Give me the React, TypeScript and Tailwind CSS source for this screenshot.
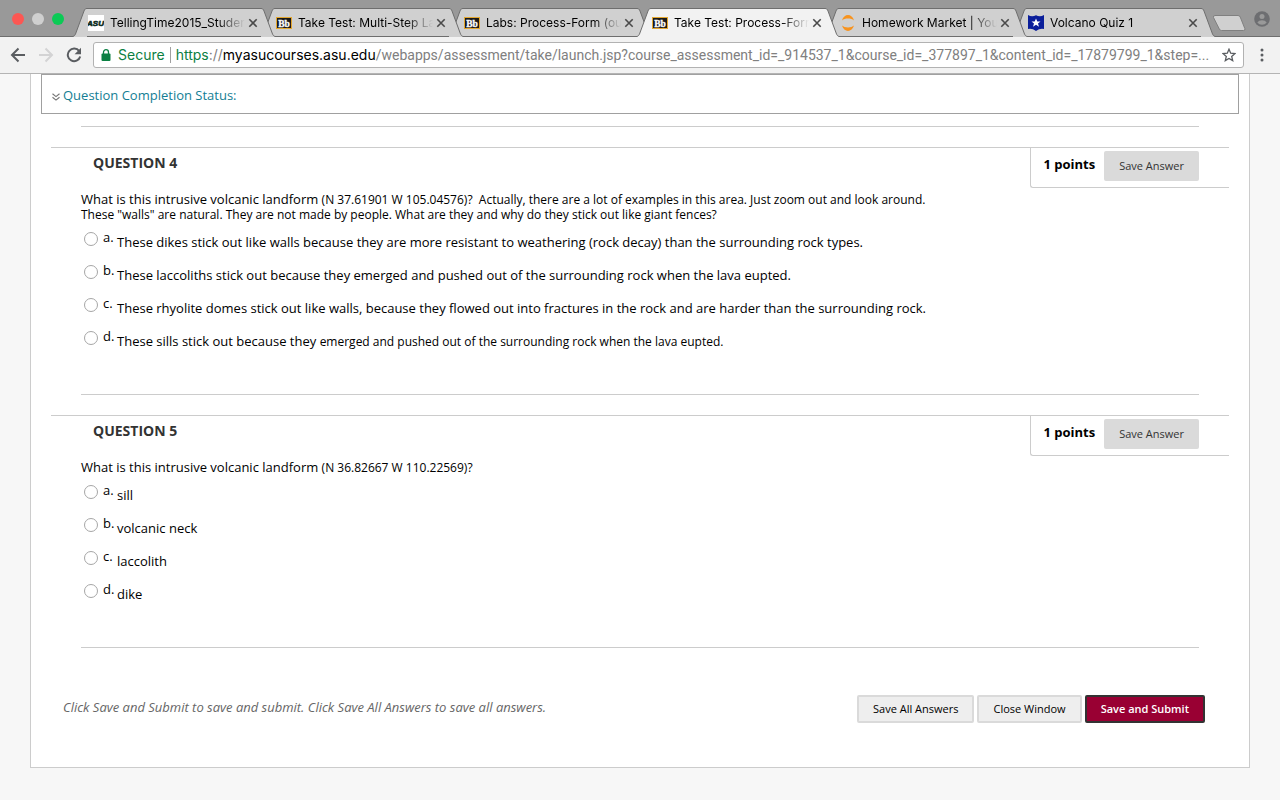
import type { ReactNode } from 'react';

type Option = { letter: string; text: ReactNode };

const BbIcon = () => (
  <svg viewBox="0 0 16 16" className="w-4 h-4">
    <rect x="0.5" y="2.5" width="15" height="11" fill="#1a1a1a" stroke="#e3a72f" />
    <text x="8" y="11.5" textAnchor="middle" fontSize="9.5" fontWeight="700" fill="#fff" stroke="#fff" strokeWidth="0.3" fontFamily="Liberation Serif, serif">Bb</text>
  </svg>
);

const AsuIcon = () => (
  <svg viewBox="0 0 16 16" className="w-4 h-4">
    <rect width="16" height="16" fill="#fff" />
    <text x="7.5" y="11" textAnchor="middle" fontSize="8" fontWeight="700" fontStyle="italic" fill="#0b2a1c" stroke="#0b2a1c" strokeWidth="0.6" fontFamily="Liberation Sans, sans-serif">ASU</text>
  </svg>
);

const JupyterIcon = () => (
  <svg viewBox="0 0 16 16" className="w-4 h-4" fill="#f7931e">
    <path d="M2 5.4C3 2 5.4 0 8 0s5 2 6 5.4C12.6 4.1 10.4 3.6 8 3.6S3.4 4.1 2 5.4z" />
    <path d="M2 10.6C3 14 5.4 16 8 16s5-2 6-5.4c-1.4 1.3-3.6 1.8-6 1.8s-4.6-.5-6-1.8z" />
  </svg>
);

const StarBadgeIcon = () => (
  <svg viewBox="0 0 16 16" className="w-4 h-4">
    <path d="M0 0q4 2.5 8 .2Q12 2.5 16 0v14q-4-1-8 2-4-3-8-2z" fill="#0a1e9a" />
    <path d="M8 3.5l1.3 3h3.2L10 8.5l1 3.2-3-1.9-3 1.9 1-3.2-2.5-2h3.2z" fill="#fff" />
  </svg>
);

const tabs = [
  { icon: <AsuIcon />, title: 'TellingTime2015_Studer' },
  { icon: <BbIcon />, title: 'Take Test: Multi-Step La' },
  { icon: <BbIcon />, title: 'Labs: Process-Form (ou' },
  { icon: <BbIcon />, title: 'Take Test: Process-Form', active: true },
  { icon: <JupyterIcon />, title: 'Homework Market | You' },
  { icon: <StarBadgeIcon />, title: 'Volcano Quiz 1' }
];

const layers = ['z-[5]', 'z-[4]', 'z-[3]', 'z-10', 'z-[2]', 'z-[1]'];

const questions: { number: number; prompt: ReactNode; options: Option[] }[] = [
  {
    number: 4,
    prompt: (
      <>
        What is this intrusive volcanic landform <span className="text-[12px]">(N 37.61901 W 105.04576)?&nbsp; Actually, there are a lot of examples in this area. Just zoom out and look around.
        <br />
        These "walls" are natural. They are not made by people. What are they and why do they stick out like giant fences?</span>
      </>
    ),
    options: [
      { letter: 'a', text: 'These dikes stick out like walls because they are more resistant to weathering (rock decay) than the surrounding rock types.' },
      { letter: 'b', text: 'These laccoliths stick out because they emerged and pushed out of the surrounding rock when the lava eupted.' },
      { letter: 'c', text: 'These rhyolite domes stick out like walls, because they flowed out into fractures in the rock and are harder than the surrounding rock.' },
      {
        letter: 'd',
        text: <>These sills stick out because they <span className="text-[12px]">emerged and pushed out of the surrounding rock when the lava eupted.</span></>
      }
    ]
  },
  {
    number: 5,
    prompt: <>What is this intrusive volcanic landform <span className="text-[12px]">(N 36.82667 W 110.22569)?</span></>,
    options: [
      { letter: 'a', text: 'sill' },
      { letter: 'b', text: 'volcanic neck' },
      { letter: 'c', text: 'laccolith' },
      { letter: 'd', text: 'dike' }
    ]
  }
];

const Tab = ({ icon, title, active, layer }: { icon: ReactNode; title: string; active?: boolean; layer: string }) => {
  const fill = active ? '#f2f2f2' : '#d0d0d0';
  return (
    <div className={`relative flex flex-1 min-w-0 max-w-[202px] h-[29px] -mb-px -mr-[14px] ${layer}`}>
      <svg viewBox="0 0 14 29" className="w-[14px] h-[29px] shrink-0">
        <path d="M0 28.5C1.5 28 2 27 2.5 26L11 3C11.7 1 12.5.5 14 .5V29H0z" fill={fill} />
        <path d="M0 28.5C1.5 28 2 27 2.5 26L11 3C11.7 1 12.5.5 14 .5" fill="none" stroke="#6e6e6e" />
      </svg>
      <div className={`flex flex-1 min-w-0 items-center border-t border-[#6e6e6e] ${active ? 'bg-[#f2f2f2]' : 'bg-[#d0d0d0] border-b'}`}>
        <span className="shrink-0 ml-px">{icon}</span>
        <span className="flex-1 min-w-0 ml-1.5 overflow-hidden whitespace-nowrap text-[12px] leading-4 text-black [mask-image:linear-gradient(to_right,#000_calc(100%-28px),transparent)]">
          {title}
        </span>
        <button aria-label="Close tab" className="shrink-0 ml-0.5 mr-0.5">
          <svg viewBox="0 0 12 12" className="w-3 h-3" stroke="#4a4a4a" strokeWidth="1.6">
            <path d="M2.3 2.3l7.4 7.4M9.7 2.3l-7.4 7.4" />
          </svg>
        </button>
      </div>
      <svg viewBox="0 0 14 29" className="w-[14px] h-[29px] shrink-0">
        <path d="M14 28.5C12.5 28 12 27 11.5 26L3 3C2.3 1 1.5.5 0 .5V29H14z" fill={fill} />
        <path d="M14 28.5C12.5 28 12 27 11.5 26L3 3C2.3 1 1.5.5 0 .5" fill="none" stroke="#6e6e6e" />
      </svg>
    </div>
  );
};

const TabStrip = () => (
  <div className="flex items-end h-[37px] bg-[#999] border-b border-[#6e6e6e]">
    <div className="flex gap-2 self-center pl-3 pr-[9px] pt-0.5 shrink-0">
      <span className="w-3 h-3 rounded-full bg-[#fc5753]" />
      <span className="w-3 h-3 rounded-full bg-[#cfcfcf]" />
      <span className="w-3 h-3 rounded-full bg-[#0bca55]" />
    </div>
    <div className="flex flex-1 min-w-0 items-end">
      {tabs.map((tab, index) => (
        <Tab key={index} {...tab} layer={layers[index]} />
      ))}
      <button aria-label="New tab" className="shrink-0 ml-[11px] mb-1">
        <svg viewBox="0 0 34 17" className="w-[34px] h-[17px]">
          <path d="M3 .5h23q1.5 0 2.2 1.5l4.6 11.5q.7 2-1.2 2H9.5q-1.5 0-2.2-1.5L1.500 2.500Q1 .5 3 .5z" fill="#d0d0d0" stroke="#808080" />
        </svg>
      </button>
    </div>
    <svg viewBox="0 0 16 16" className="w-4 h-4 mr-2.5 mb-[9px] shrink-0">
      <circle cx="8" cy="8" r="7.8" fill="#6d6e71" />
      <circle cx="8" cy="5.6" r="2.5" fill="#999" />
      <path d="M3.3 11.5q1.5-2.3 4.7-2.3t4.7 2.3q-1.8 2.3-4.7 2.3t-4.7-2.3z" fill="#999" />
    </svg>
  </div>
);

const Toolbar = () => (
  <div className="flex items-center h-[37px] bg-[#f2f2f2] border-b border-[#b4b4b4]">
    <div className="flex items-center gap-3 pl-2.5 pr-[11px] shrink-0">
      <button aria-label="Back">
        <svg viewBox="0 0 16 16" className="w-4 h-4" fill="none" stroke="#5a5d61" strokeWidth="2">
          <path d="M15 8H2.5M8.5 1.5L2 8l6.5 6.5" />
        </svg>
      </button>
      <button aria-label="Forward">
        <svg viewBox="0 0 16 16" className="w-4 h-4" fill="none" stroke="#d3d3d4" strokeWidth="2">
          <path d="M1 8h12.5M7.5 1.5L14 8l-6.5 6.5" />
        </svg>
      </button>
      <button aria-label="Reload">
        <svg viewBox="0 0 16 16" className="w-4 h-4">
          <path d="M13.2 4.2A6.3 6.3 0 1 0 14.2 9.5" fill="none" stroke="#5a5d61" strokeWidth="2" />
          <path d="M15 .8v6.4H8.6z" fill="#5a5d61" />
        </svg>
      </button>
    </div>
    <div className="flex flex-1 min-w-0 items-center h-[26px] px-[7px] bg-white border border-[#b2b2b2] rounded-[3px] text-[14px] leading-5">
      <svg viewBox="0 0 10 12" className="w-2.5 h-3 shrink-0 mr-[7px]">
        <rect x="0.5" y="4.5" width="9" height="7.5" rx="1" fill="#0b8043" />
        <path d="M2.5 5V3.2a2.5 2.5 0 0 1 5 0V5" fill="none" stroke="#0b8043" strokeWidth="1.3" />
      </svg>
      <span className="text-[#0b8043] shrink-0">Secure</span>
      <span className="w-px h-4 bg-[#a0a0a0] mx-[5px] shrink-0" />
      <span className="flex-1 min-w-0 truncate text-[#808080]">
        <span className="text-[#0b8043]">https</span>://<span className="text-black">myasucourses.asu.edu</span>
        <span className="font-['Roboto',sans-serif]">
          /webapps/assessment/take/launch.jsp?course_assessment_id=_914537_1&amp;course_id=_377897_1&amp;content_id=_17879799_1&amp;step=...
        </span>
      </span>
      <button aria-label="Bookmark" className="shrink-0">
        <svg viewBox="0 0 14 14" className="w-3.5 h-3.5" fill="none" stroke="#5a5d61" strokeWidth="1.3">
          <path d="M7 1.2l1.7 4 4.3.4-3.3 2.8 1 4.2L7 10.4l-3.7 2.2 1-4.2L1 5.6l4.3-.4z" />
        </svg>
      </button>
    </div>
    <button aria-label="Menu" className="shrink-0 px-4">
      <svg viewBox="0 0 4 14" className="w-1 h-3.5" fill="#5a5d61">
        <circle cx="2" cy="2" r="1.5" />
        <circle cx="2" cy="7" r="1.5" />
        <circle cx="2" cy="12" r="1.5" />
      </svg>
    </button>
  </div>
);

const Question = ({ number, prompt, options }: { number: number; prompt: ReactNode; options: Option[] }) => (
  <section className="mt-5">
    <div className="flex justify-between h-[41px] mx-5 border-t border-[#ccc]">
      <h3 className="pl-[42px] pt-[5px] text-[14px] leading-[19px] font-bold text-[#333]">QUESTION {number}</h3>
      <div className="flex items-start pl-3 pr-[30px] pt-[3px] border-l border-b border-[#ccc] rounded-bl-[3px]">
        <span className="pt-1 mr-[9px] text-[13px] leading-[19px] font-bold text-black">1 points</span>
        <button className="h-[30px] px-[15px] bg-[#dadada] rounded-[2px] text-[11px] text-[#333]">Save Answer</button>
      </div>
    </div>
    <div className="mx-[50px] pt-1 pb-9 border-b border-[#ccc] text-[13px] text-black">
      <p className="leading-[15px]">{prompt}</p>
      <div className="pt-1">
        {options.map((option) => {
          const id = `q${number}-${option.letter}`;
          return (
            <div key={option.letter} className="flex items-start h-[33px]">
              <input
                type="radio"
                id={id}
                name={`q${number}`}
                className="appearance-none w-3.5 h-3.5 mt-1.5 ml-[3px] mr-[5px] shrink-0 rounded-full border border-[#a6a6a6] bg-white"
              />
              <label htmlFor={id} className="flex">
                <span className="w-3.5 shrink-0 pt-[3px] leading-4">{option.letter}.</span>
                <span className="pt-2 leading-4">{option.text}</span>
              </label>
            </div>
          );
        })}
      </div>
    </div>
  </section>
);

const App = () => (
  <div className="min-h-screen bg-[#f7f7f7] font-['Open_Sans',sans-serif]">
    <header className="font-['Inter',sans-serif]">
      <TabStrip />
      <Toolbar />
    </header>
    <main className="mx-[30px] bg-white border-x border-b border-[#ccc]">
      <div className="flex items-center h-10 mx-2.5 px-2.5 pt-[3px] border border-[#a0a0a0]">
        <a href="#status" className="flex items-center gap-[3px] text-[13px] text-[#137e94]">
          <svg viewBox="0 0 8 8" className="w-2 h-2 mt-0.5" fill="none" stroke="#777" strokeWidth="1.2">
            <path d="M.5.8L4 3.6 7.5.8M.5 4.3L4 7.1l3.5-2.8" />
          </svg>
          Question Completion Status:
        </a>
      </div>
      <div className="mx-[50px] mt-3 border-b border-[#ccc]" />
      {questions.map((question) => (
        <Question key={question.number} {...question} />
      ))}
      <footer className="flex items-center justify-between pl-8 pr-11 pt-[47px] pb-11">
        <p className="text-[13px] leading-4 pb-1 italic font-medium text-[#666]">
          Click Save and Submit to save and submit. Click Save All Answers to save all answers.
        </p>
        <div className="flex gap-[3px] text-[11px]">
          <button className="h-7 px-[14px] bg-[#eee] border-2 border-[#dadada] rounded-[2px] text-black">Save All Answers</button>
          <button className="h-7 px-[14px] bg-[#eee] border-2 border-[#dadada] rounded-[2px] text-black">Close Window</button>
          <button className="h-7 px-[14px] bg-[#990033] border-2 border-[#333] rounded-[2px] font-semibold text-white">Save and Submit</button>
        </div>
      </footer>
    </main>
  </div>
);

export default App;
